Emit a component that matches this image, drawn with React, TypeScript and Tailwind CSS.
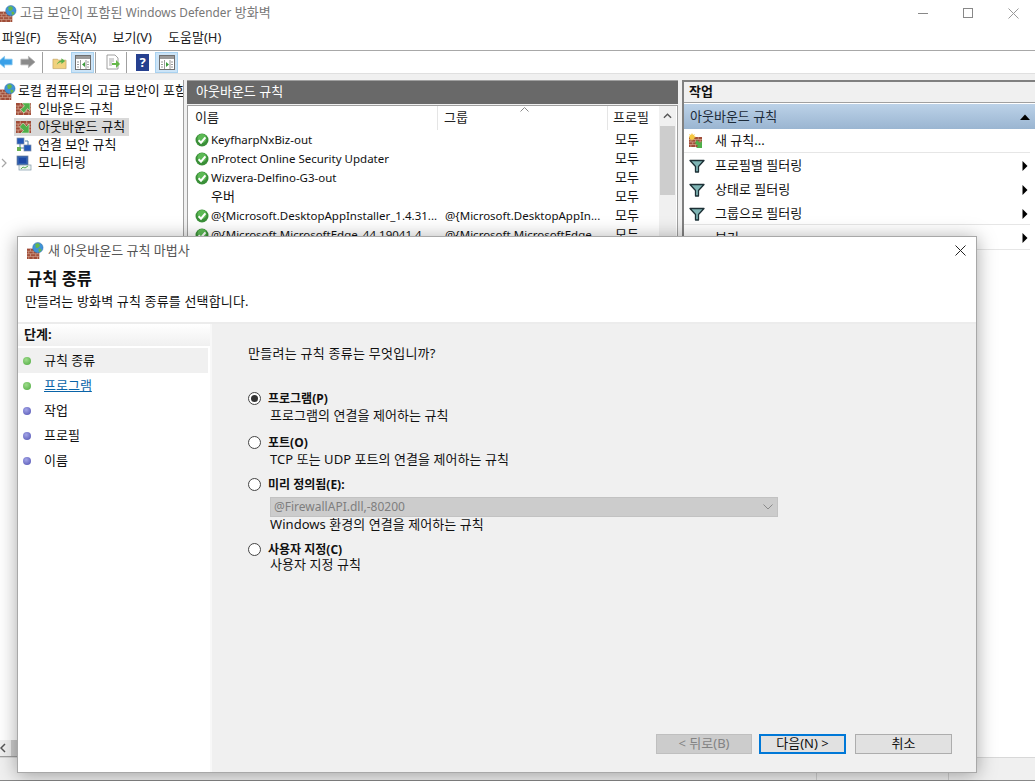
import React from "react";

const Bricks = ({ x = 0, y = 0, w = 14, h = 12 }: { x?: number; y?: number; w?: number; h?: number }) => (
  <g transform={`translate(${x} ${y}) scale(${w / 14} ${h / 12})`}>
    <rect width="14" height="12" fill="#a04c38" />
    <path d="M0 3h14M0 6h14M0 9h14M4 0v3M10 0v3M2 3v3M7 3v3M12 3v3M4 6v3M10 6v3M2 9v3M7 9v3M12 9v3" stroke="#d9b09a" strokeWidth="0.7" />
  </g>
);

const Globe = ({ cx, cy, r }: { cx: number; cy: number; r: number }) => (
  <g>
    <circle cx={cx} cy={cy} r={r} fill="#3f93d8" stroke="#2a6aa6" strokeWidth="0.5" />
    <path d={`M${cx - r * 0.5} ${cy - r * 0.7}q${r * 0.8} ${-r * 0.4} ${r * 0.9} ${r * 0.3}q${-r * 0.2} ${r * 0.6} ${-r * 0.8} ${r * 0.4}z`} fill="#66b84a" />
    <path d={`M${cx + r * 0.1} ${cy + r * 0.2}q${r * 0.6} ${-r * 0.1} ${r * 0.6} ${r * 0.4}l${-r * 0.5} ${r * 0.3}z`} fill="#66b84a" />
  </g>
);

const FirewallIcon = ({ className }: { className: string }) => (
  <svg viewBox="0 0 18 18" className={className}>
    <Bricks x={0} y={7} w={13} h={11} />
    <Globe cx={11.5} cy={6} r={5.5} />
  </svg>
);

const WallArrow = ({ dir }: { dir: "in" | "out" }) => (
  <svg viewBox="0 0 16 16" className="w-4 h-4 shrink-0">
    <Bricks x={0} y={2} w={15} h={12} />
    {dir === "in" ? (
      <path d="M6 2h8v8l-2.500-2.500L8 12 4.500 8.500 8.500 5z" fill="#4fb04a" stroke="#e8f5e0" strokeWidth="0.5" />
    ) : (
      <path d="M7 4l3.500 3.500L13 5v9H5l2.500-2.500L3.500 8z" fill="#4fb04a" stroke="#e8f5e0" strokeWidth="0.5" />
    )}
  </svg>
);

const Monitors = ({ monitor }: { monitor?: boolean }) => (
  <svg viewBox="0 0 16 16" className="w-4 h-4 shrink-0">
    {monitor ? (
      <>
        <rect x="1" y="1" width="11" height="9" fill="#2f5fb0" stroke="#6d7f99" strokeWidth="0.7" />
        <rect x="3" y="3" width="7" height="5" fill="#1d49a4" />
        <rect x="3" y="10" width="12" height="5" fill="#eef4ee" stroke="#7f97a8" strokeWidth="0.7" />
        <path d="M5 14l2-2 2 1 3-2" stroke="#46a843" fill="none" strokeWidth="0.9" />
      </>
    ) : (
      <>
        <rect x="1" y="1" width="7" height="6" fill="#2358b8" stroke="#7d8ea8" strokeWidth="0.7" />
        <rect x="8" y="8" width="7" height="6" fill="#2358b8" stroke="#7d8ea8" strokeWidth="0.7" />
        <path d="M4 7v4h4M9 4h3v4" stroke="#4d7fa3" fill="none" strokeWidth="1" />
        <rect x="1" y="10" width="4" height="4" fill="#69b150" />
      </>
    )}
  </svg>
);

const Check = () => (
  <svg viewBox="0 0 14 14" className="w-[14px] h-[14px] shrink-0">
    <circle cx="7" cy="7" r="6.500" fill="#3a8f38" />
    <circle cx="7" cy="5.500" r="4.500" fill="#5cb955" />
    <path d="M3.600 7.200l2.400 2.500 4.400-5.400" stroke="#fff" strokeWidth="2" fill="none" />
  </svg>
);

const Funnel = () => (
  <svg viewBox="0 0 16 14" className="w-4 h-[14px] shrink-0">
    <path d="M1 1.500h14L9.500 7.500V13h-3V7.500z" fill="#7fb5b5" stroke="#1d3036" strokeWidth="1.300" strokeLinejoin="round" />
  </svg>
);

const NavArrow = ({ left }: { left?: boolean }) => (
  <svg viewBox="0 0 18 14" className="w-[17px] h-[14px]">
    {left ? (
      <path d="M1 7l7-6v3h8v6H8v3z" fill="#3aa0e8" stroke="#7cc3ee" strokeWidth="0.8" />
    ) : (
      <path d="M17 7l-7-6v3H2v6h8v3z" fill="#8a8a8a" stroke="#b0b0b0" strokeWidth="0.8" />
    )}
  </svg>
);

const PaneIcon = ({ side }: { side: "left" | "right" }) => (
  <svg viewBox="0 0 16 15" className="w-4 h-[15px]">
    <rect x="0.500" y="0.500" width="15" height="14" fill="#fff" stroke="#6f6f6f" />
    <rect x="1" y="1" width="14" height="3" fill="#9a9a9a" />
    <path d="M5.500 5v9M11 5v9" stroke="#9a9a9a" />
    {side === "left" ? <path d="M10 7v5L7 9.500z" fill="#3a9a3a" /> : <path d="M7 7v5l3-2.500z" fill="#3a9a3a" />}
    <path d="M2 7h2M2 9.500h2M2 12h2M12 7h2M12 9.500h2M12 12h2" stroke="#9a9a9a" />
  </svg>
);

const Sep = () => <div className="w-px h-[21px] bg-[#a0a0a0]" />;

const Tool = ({ active, children }: { active?: boolean; children: React.ReactNode }) => (
  <div className={`w-[23px] h-[21px] flex items-center justify-center border ${active ? "bg-[#cce4f7] border-[#a9d2f0]" : "border-transparent"}`}>
    {children}
  </div>
);

const tree = [
  { label: "인바운드 규칙", icon: <WallArrow dir="in" /> },
  { label: "아웃바운드 규칙", icon: <WallArrow dir="out" />, selected: true },
  { label: "연결 보안 규칙", icon: <Monitors /> },
  { label: "모니터링", icon: <Monitors monitor />, chevron: true },
];

const rules = [
  { name: "KeyfharpNxBiz-out", group: "", check: true },
  { name: "nProtect Online Security Updater", group: "", check: true },
  { name: "Wizvera-Delfino-G3-out", group: "", check: true },
  { name: "우버", group: "", check: false },
  { name: "@{Microsoft.DesktopAppInstaller_1.4.31...", group: "@{Microsoft.DesktopAppIn...", check: true },
  { name: "@{Microsoft.MicrosoftEdge_44.19041.4...", group: "@{Microsoft.MicrosoftEdge...", check: true },
];

const steps = [
  { label: "규칙 종류", done: true, selected: true },
  { label: "프로그램", done: true, link: true },
  { label: "작업" },
  { label: "프로필" },
  { label: "이름" },
];

const Radio = ({ checked }: { checked?: boolean }) => (
  <span className="w-[13px] h-[13px] rounded-full border border-[#444] bg-white flex items-center justify-center shrink-0">
    {checked && <span className="w-[7px] h-[7px] rounded-full bg-[#333]" />}
  </span>
);

const Option = ({ label, desc, checked, combo, descClass = "" }: { label: string; desc: string; checked?: boolean; combo?: boolean; descClass?: string }) => (
  <div className="flex flex-col">
    <div className="flex items-center h-[17px] gap-[7px]">
      <Radio checked={checked} />
      <span className="text-[12px] font-bold text-[#111]">{label}</span>
    </div>
    {combo && (
      <div className="ml-[22px] mt-[4px] w-[508px] h-[20px] bg-[#cccccc] border border-[#c2c2c2] flex items-center justify-between pl-[3px] pr-[2px] text-[12px] text-[#7e7e7e]">
        <span>@FirewallAPI.dll,-80200</span>
        <svg viewBox="0 0 10 6" className="w-[10px] h-[6px] mr-[2px]">
          <path d="M0.500 0.500L5 5l4.500-4.500" stroke="#8a8a8a" fill="none" />
        </svg>
      </div>
    )}
    <div className={`ml-[22px] h-[16px] leading-[16px] text-[13px] tracking-[0.05px] text-[#111] ${descClass}`}>{desc}</div>
  </div>
);

const ActionRow = ({ icon, label, arrow, border, tall }: { icon: React.ReactNode; label: string; arrow?: boolean; border?: boolean; tall?: boolean }) => (
  <div className={`flex items-center ${tall ? "h-[25px]" : "h-[24px]"} pl-[5px] pr-[2px] mr-[5px] ${arrow ? "pt-[2px]" : ""} ${border ? "border-b border-[#e6e6e6]" : ""}`}>
    <div className="w-[26px] flex items-center">{icon}</div>
    <span className="flex-1 text-[13px] text-[#111]">{label}</span>
    {arrow && (
      <svg viewBox="0 0 6 10" className="w-[6px] h-[10px]">
        <path d="M0.500 0L5.500 5 0.500 10z" fill="#000" />
      </svg>
    )}
  </div>
);

export default function App() {
  return (
    <div className="relative w-[1035px] h-[781px] overflow-hidden bg-white text-[13px] [font-family:'Noto_Sans','Noto_Sans_CJK_KR',sans-serif]">
      {/* main window */}
      <div className="flex flex-col h-full">
        <div className="flex items-center h-[26px] shrink-0">
          <FirewallIcon className="w-[17px] h-[17px] mr-[3px]" />
          <span className="text-[13px] text-[#777]">
            고급 보안이 포함된 <span className="text-[11.800px]">Windows Defender</span> 방화벽
          </span>
          <div className="ml-auto flex items-center gap-[35px] mr-[16px]">
            <div className="w-[10px] h-px bg-[#888]" />
            <div className="w-[10px] h-[10px] border border-[#888]" />
            <svg viewBox="0 0 11 11" className="w-[11px] h-[11px]">
              <path d="M0.500 0.500l10 10M10.500 0.500l-10 10" stroke="#999" />
            </svg>
          </div>
        </div>
        <div className="flex items-center gap-[16px] h-[25px] shrink-0 pl-[2px] border-b border-[#a8a8a8] text-[13px] text-[#222]">
          <span>파일(F)</span>
          <span>동작(A)</span>
          <span>보기(V)</span>
          <span>도움말(H)</span>
        </div>
        <div className="flex items-center h-[23px] shrink-0 border-b border-[#e0e0e0]">
          <div className="w-[20px] flex justify-start -ml-[3px]"><NavArrow left /></div>
          <div className="w-[20px] flex justify-center mr-[5px]"><NavArrow /></div>
          <Sep />
          <div className="ml-[5px]">
            <Tool>
              <svg viewBox="0 0 16 15" className="w-[15px] h-[15px]">
                <path d="M1 4h5l1 1h8v9H1z" fill="#f1d27e" stroke="#c0a060" strokeWidth="0.7" />
                <path d="M5 10q1-4 5-5V3l4 3-4 3V7q-3 0-5 3z" fill="#5ab04a" />
              </svg>
            </Tool>
          </div>
          <Tool active><PaneIcon side="left" /></Tool>
          <div className="ml-[1px]"><Sep /></div>
          <div className="ml-[5px]">
            <Tool>
              <svg viewBox="0 0 16 16" className="w-[16px] h-[16px]">
                <path d="M2 1h8l3 3v11H2z" fill="#fff" stroke="#888" strokeWidth="0.8" />
                <path d="M4 5h5M4 7h5M4 9h3M4 11h3" stroke="#aaa" />
                <path d="M7 9h4V6l4 4-4 4v-3H7z" fill="#66b84a" />
              </svg>
            </Tool>
          </div>
          <div className="ml-[2px]"><Sep /></div>
          <div className="ml-[4px]">
            <Tool>
              <div className="w-[13px] h-[17px] bg-[#26408f] text-white font-bold text-[13px] leading-[17px] text-center">?</div>
            </Tool>
          </div>
          <div className="ml-[1px]"><Tool active><PaneIcon side="right" /></Tool></div>
        </div>
        <div className="flex-1 min-h-0 flex flex-col bg-[#f0f0f0]">
          <div className="flex-1 min-h-0 flex pt-[6px]">
            {/* tree */}
            <div className="w-[184px] shrink-0 bg-white border-r border-[#a0a0a0] flex flex-col overflow-hidden">
              <div className="flex-1 flex flex-col pt-[2px]">
                <div className="flex items-center h-[18px] whitespace-nowrap">
                  <FirewallIcon className="w-[17px] h-[17px] mr-[2px] shrink-0 -ml-[1px]" />
                  <span className="text-[13px] text-[#111]">로컬 컴퓨터의 고급 보안이 포함된</span>
                </div>
                {tree.map((t) => (
                  <div key={t.label} className="flex items-center h-[18px] pl-[1px]">
                    <div className="w-[13px] flex justify-start">
                      {t.chevron && (
                        <svg viewBox="0 0 6 10" className="w-[6px] h-[10px]">
                          <path d="M1 1l4 4-4 4" stroke="#a6a6a6" fill="none" strokeWidth="1.200" />
                        </svg>
                      )}
                    </div>
                    <div className={`flex items-center h-[18px] pl-[2px] pr-[4px] gap-[6px] ${t.selected ? "bg-[#d9d9d9]" : ""}`}>
                      {t.icon}
                      <span className="text-[13px] text-[#111]">{t.label}</span>
                    </div>
                  </div>
                ))}
              </div>
              <div className="h-[17px] shrink-0 flex items-center bg-[#f0f0f0] border-b border-[#a0a0a0]">
                <svg viewBox="0 0 6 10" className="w-[6px] h-[10px]">
                  <path d="M5 1L1 5l4 4" stroke="#555" fill="none" strokeWidth="1.500" />
                </svg>
                <div className="ml-[5px] w-[40px] h-full bg-[#cdcdcd]" />
              </div>
            </div>
            {/* center */}
            <div className="ml-[3px] w-[491px] shrink-0 flex flex-col border-t border-[#a0a0a0]">
              <div className="h-[23px] shrink-0 bg-[#696969] text-white text-[13px] flex items-center px-[9px] pb-[2px]">아웃바운드 규칙</div>
              <div className="flex-1 min-h-0 mt-[1px] bg-white border border-[#a0a0a0] flex">
                <div className="w-[471px] flex flex-col">
                  <div className="relative flex h-[24px] text-[13px] text-[#222]">
                    <div className="w-[250px] border-r border-[#e5e5e5] pl-[7px] flex items-center">이름</div>
                    <div className="w-[170px] border-r border-[#e5e5e5] pl-[6px] flex items-center">그룹</div>
                    <div className="flex-1 pl-[5px] flex items-center">프로필</div>
                    <svg viewBox="0 0 9 5" className="absolute left-[332px] top-[1px] w-[9px] h-[5px]">
                      <path d="M0.500 4.500L4.500 0.500l4 4" stroke="#888" fill="none" />
                    </svg>
                  </div>
                  <div>
                    {rules.map((r) => (
                      <div key={r.name} className="flex items-center h-[19px] text-[11.500px] text-[#111] whitespace-nowrap">
                        <div className="w-[23px] pl-[7px] flex">{r.check && <Check />}</div>
                        <div className={`w-[234px] ${r.check ? "" : "text-[13px]"}`}>{r.name}</div>
                        <div className="w-[170px]">{r.group}</div>
                        <div className="text-[13px]">모두</div>
                      </div>
                    ))}
                  </div>
                </div>
                <div className="w-[17px] bg-[#f0f0f0] flex flex-col items-center">
                  <svg viewBox="0 0 10 6" className="mt-[7px] mb-[7px] w-[9px] h-[6px]">
                    <path d="M1 5l4-4 4 4" stroke="#555" strokeWidth="1.500" fill="none" />
                  </svg>
                  <div className="w-[15px] h-[69px] bg-[#cdcdcd]" />
                </div>
              </div>
            </div>
            {/* actions */}
            <div className="ml-[4px] flex-1 min-w-0 flex flex-col bg-white border-t-2 border-l-2 border-[#808080]">
              <div className="h-[21px] shrink-0 bg-[#f0f0f0] border-b border-[#a0a0a0] flex items-center pl-[5px] text-[13px] font-bold text-[#111]">작업</div>
              <div className="mt-[1px] h-[25px] shrink-0 bg-gradient-to-b from-[#bcd2e8] to-[#9ab5d1] flex items-center pl-[6px] pr-[5px] justify-between text-[13px] text-[#1c2a38]">
                아웃바운드 규칙
                <svg viewBox="0 0 10 6" className="w-[10px] h-[6px]">
                  <path d="M0 6l5-5.500L10 6z" fill="#000" />
                </svg>
              </div>
              <div className="flex flex-col flex-1">
                <ActionRow border label="새 규칙..." icon={
                  <svg viewBox="0 0 16 16" className="w-4 h-4">
                    <Bricks x={0} y={4} w={13} h={10} />
                    <path d="M3 0l1 2 2-1-1 2 2 1-2 1 1 2-2-1-1 2-1-2-2 1 1-2-2-1 2-1-1-2 2 1z" fill="#f5c842" />
                    <path d="M8 7l3 3 2-2v7H7l2-2-3-3z" fill="#4fb04a" />
                  </svg>
                } />
                <ActionRow label="프로필별 필터링" arrow icon={<Funnel />} />
                <ActionRow label="상태로 필터링" arrow icon={<Funnel />} />
                <ActionRow border label="그룹으로 필터링" arrow icon={<Funnel />} />
                <ActionRow border tall label="보기" arrow icon={<span />} />
              </div>
            </div>
          </div>
          {/* status bar */}
          <div className="h-[23px] shrink-0 border-t border-[#d8d8d8] flex">
            <div className="w-[817px] border-r border-[#d0d0d0]" />
            <div className="w-[132px] border-r border-[#d0d0d0]" />
          </div>
        </div>
        <div className="h-px shrink-0 bg-[#888]" />
      </div>

      {/* wizard dialog */}
      <div className="absolute left-[17px] top-[236px] w-[960px] h-[537px] bg-white border border-[#a8a8a8] shadow-[0_2px_18px_rgba(0,0,0,0.35)] flex flex-col">
        <div className="h-[27px] shrink-0 flex items-center pl-[9px] pr-[10px]">
          <FirewallIcon className="w-[17px] h-[17px] mr-[4px]" />
          <span className="text-[13px] text-[#555]">새 아웃바운드 규칙 마법사</span>
          <svg viewBox="0 0 11 11" className="ml-auto w-[11px] h-[11px]">
            <path d="M0.500 0.500l10 10M10.500 0.500l-10 10" stroke="#222" />
          </svg>
        </div>
        <div className="h-[60px] shrink-0 pl-[9px] border-b-2 border-[#ececec] flex flex-col">
          <div className="mt-[3px] h-[24px] flex items-center text-[16.500px] font-bold text-[#111]">규칙 종류</div>
          <div className="mt-[1px] text-[13px] tracking-[0.15px] text-[#111] -ml-[2px]">만들려는 방화벽 규칙 종류를 선택합니다.</div>
        </div>
        <div className="flex-1 min-h-0 flex">
          <div className="w-[194px] shrink-0 border-r-2 border-[#f8f8f8]">
            <div className="h-[22px] bg-gradient-to-b from-white to-[#f0f0f0] pl-[6px] flex items-center text-[13px] font-bold text-[#111]">단계:</div>
            <div className="pr-[2px] pt-[2px]">
              {steps.map((s) => (
                <div key={s.label} className={`flex items-center h-[25px] pl-[5px] gap-[13px] ${s.selected ? "bg-[#f0f0f0]" : ""}`}>
                  <span className={`w-[8px] h-[8px] rounded-full ${s.done ? "bg-[radial-gradient(circle_at_40%_35%,#9fdc8c,#4aa83c)]" : "bg-[radial-gradient(circle_at_40%_35%,#a4a6e8,#4f50b0)]"}`} />
                  <span className={`text-[13px] ${s.link ? "text-[#0a64a8] underline" : "text-[#111]"}`}>{s.label}</span>
                </div>
              ))}
            </div>
          </div>
          <div className="flex-1 min-w-0 bg-[#f0f0f0] flex flex-col pl-[36px]">
            <div className="mt-[21px] h-[18px] text-[13px] tracking-[0.25px] text-[#111] flex items-center">만들려는 규칙 종류는 무엇입니까?</div>
            <div className="mt-[27px] flex flex-col">
              <Option checked label="프로그램(P)" desc="프로그램의 연결을 제어하는 규칙" />
              <div className="h-[11px]" />
              <Option label="포트(O)" desc="TCP 또는 UDP 포트의 연결을 제어하는 규칙" />
              <div className="h-[9px]" />
              <Option combo label="미리 정의됨(E):" desc="Windows 환경의 연결을 제어하는 규칙" descClass="-mt-px" />
              <div className="h-[9px]" />
              <Option label="사용자 지정(C)" desc="사용자 지정 규칙" descClass="-mt-[2px]" />
            </div>
            <div className="mt-auto mb-[18px] flex justify-end pr-[24px] text-[13px]">
              <div className="w-[96px] h-[20px] flex items-center justify-center bg-[#cccccc] border border-[#bfbfbf] text-[#838383]">&lt; 뒤로(B)</div>
              <div className="ml-[7px] w-[87px] h-[20px] flex items-center justify-center bg-[#e1e1e1] border-2 border-[#0078d7] text-[#111]">다음(N) &gt;</div>
              <div className="ml-[9px] w-[97px] h-[20px] flex items-center justify-center bg-[#e1e1e1] border border-[#adadad] text-[#111]">취소</div>
            </div>
          </div>
        </div>
      </div>
    </div>
  );
}
